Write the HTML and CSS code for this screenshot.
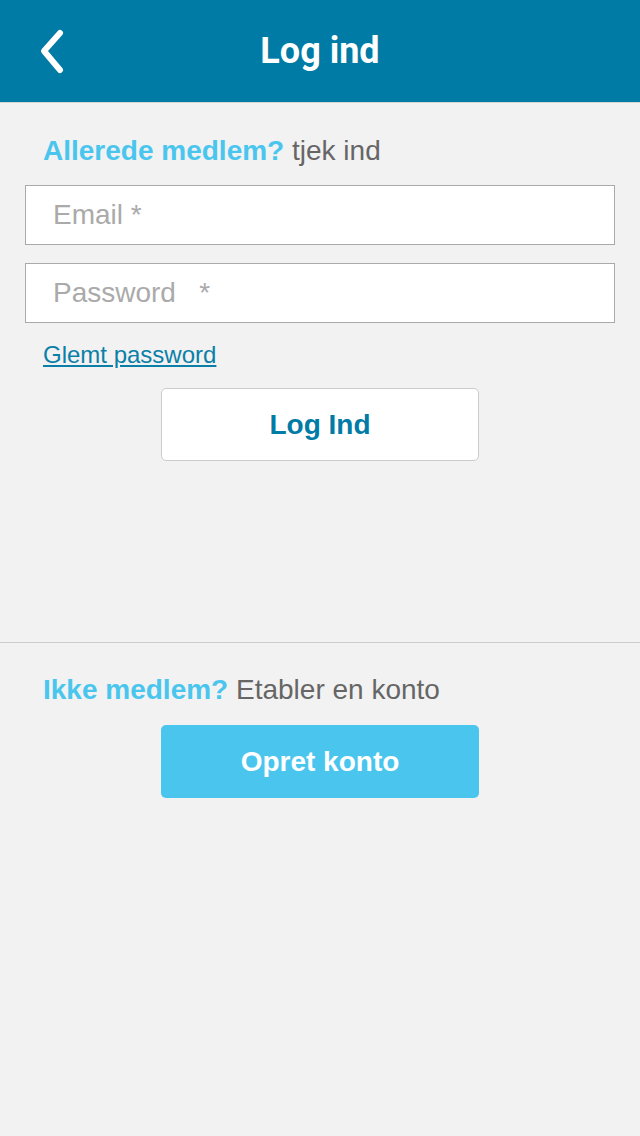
FILE: index.html
```html
<!DOCTYPE html>
<html lang="da">
<head>
    <meta charset="UTF-8">
    <meta name="viewport" content="width=device-width, initial-scale=1.0">
    <title>Log ind</title>
    <link rel="stylesheet" href="styles.css">
</head>
<body>
    <header class="topbar">
        <a class="back" href="#">
            <svg width="34" height="50" viewBox="0 0 34 50">
                <polyline points="22,6 6,24 22,43" fill="none" stroke="#fff" stroke-width="6" stroke-linecap="round" stroke-linejoin="round"/>
            </svg>
        </a>
        <h1>Log ind</h1>
    </header>

    <section class="login">
        <p class="lead"><strong>Allerede medlem?</strong> tjek ind</p>
        <input class="field" type="email" placeholder="Email *">
        <input class="field" type="password" placeholder="Password   *">
        <a class="forgot" href="#">Glemt password</a>
        <button class="btn btn-white">Log Ind</button>
    </section>

    <section class="signup">
        <p class="lead"><strong>Ikke medlem?</strong> Etabler en konto</p>
        <button class="btn btn-blue">Opret konto</button>
    </section>
</body>
</html>
```

FILE: styles.css
```css
body {
    margin: 0;
    background-color: #f2f2f2;
    font-family: "Liberation Sans", Arial, sans-serif;
}
.topbar {
    height: 102px;
    background-color: #007ba5;
    border-bottom: 1px solid #d6d6d6;
    display: flex;
    align-items: center;
    justify-content: center;
    position: relative;
}
.topbar h1 {
    margin: 0;
    color: #fff;
    font-family: Roboto, sans-serif;
    font-weight: bold;
    font-size: 36px;
}
.back {
    position: absolute;
    left: 38px;
    top: 27px;
    display: block;
    height: 50px;
}
.login {
    box-sizing: border-box;
    height: 540px;
    padding: 32px 25px 0 25px;
    border-bottom: 1px solid #cccccc;
    display: flex;
    flex-direction: column;
}
.lead {
    margin: 0 0 0 18px;
    font-size: 28px;
    line-height: 32px;
    color: #666;
}
.lead strong {
    color: #4ac6ee;
}
.field {
    height: 60px;
    box-sizing: border-box;
    margin-top: 18px;
    border: 1px solid #aaaaaa;
    background: #fff;
    padding: 0 27px;
    font-family: "Liberation Sans", Arial, sans-serif;
    font-size: 28px;
    outline: none;
}
.field::placeholder {
    color: #aaaaaa;
    white-space: pre;
}
.forgot {
    margin: 18px 0 0 18px;
    align-self: flex-start;
    color: #0a80a8;
    font-size: 24px;
    line-height: 28px;
}
.btn {
    align-self: center;
    box-sizing: border-box;
    width: 318px;
    height: 73px;
    border-radius: 5px;
    font-family: "Liberation Sans", Arial, sans-serif;
    font-size: 28px;
    font-weight: bold;
    cursor: pointer;
}
.btn-white {
    margin-top: 19px;
    background-color: #fff;
    border: 1px solid #cccccc;
    color: #007ba5;
}
.signup {
    padding: 31px 25px 0 25px;
    display: flex;
    flex-direction: column;
}
.btn-blue {
    margin-top: 19px;
    background-color: #4ac6ee;
    border: none;
    color: #fff;
}
```
